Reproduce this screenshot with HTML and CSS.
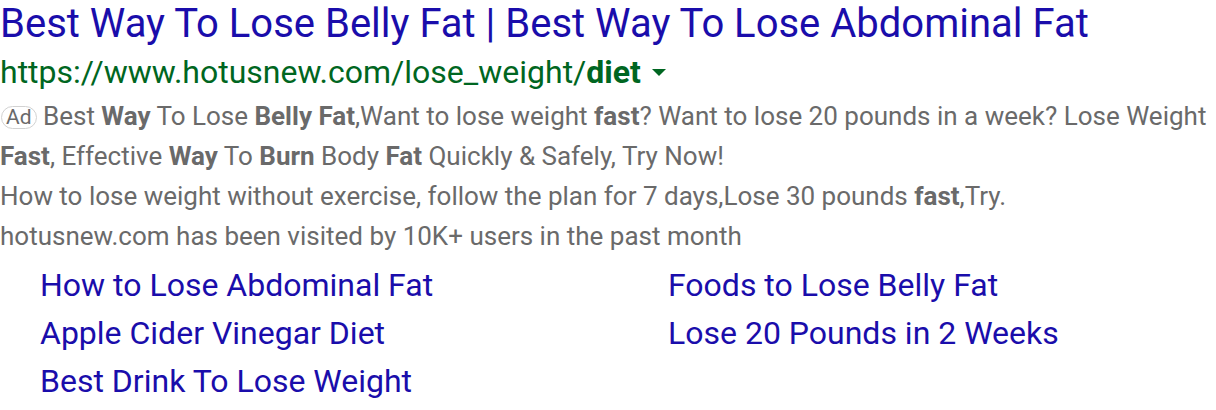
FILE: index.html
```html
<!DOCTYPE html>
<html>
<head>
<meta charset="utf-8">
<link rel="stylesheet" href="styles.css">
</head>
<body>
<div class="ad">
  <a class="title" href="#">Best Way To Lose Belly Fat | Best Way To Lose Abdominal Fat</a>
  <div class="url">https://www.hotusnew.com/lose_weight/<b>diet</b><span class="caret"></span></div>
  <div class="desc">
    <span class="badge">Ad</span> Best <b>Way</b> To Lose <b>Belly Fat</b>,Want to lose weight <b>fast</b>? Want to lose 20 pounds in a week? Lose Weight <b>Fast</b>, Effective <b>Way</b> To <b>Burn</b> Body <b>Fat</b> Quickly &amp; Safely, Try Now!
  </div>
  <div class="desc">How to lose weight without exercise, follow the plan for 7 days,Lose 30 pounds <b>fast</b>,Try.</div>
  <div class="desc">hotusnew.com has been visited by 10K+ users in the past month</div>
  <div class="sitelinks">
    <a href="#">How to Lose Abdominal Fat</a>
    <a href="#">Foods to Lose Belly Fat</a>
    <a href="#">Apple Cider Vinegar Diet</a>
    <a href="#">Lose 20 Pounds in 2 Weeks</a>
    <a href="#">Best Drink To Lose Weight</a>
  </div>
</div>
</body>
</html>
```
FILE: styles.css
```css
html, body {
  margin: 0;
  padding: 0;
  background: #fff;
}
body {
  font-family: Roboto, "Liberation Sans", Arial, sans-serif;
}
a {
  text-decoration: none;
}
.ad {
  display: flex;
  flex-direction: column;
  align-items: flex-start;
}
.title {
  color: #1a0dab;
  font-size: 40px;
  line-height: 48px;
  display: block;
}
.url {
  color: #006621;
  font-size: 32px;
  line-height: 48px;
}
.url b {
  font-weight: 700;
}
.caret {
  display: inline-block;
  width: 0;
  height: 0;
  border-left: 7px solid transparent;
  border-right: 7px solid transparent;
  border-top: 7px solid #006621;
  margin-left: 11px;
  vertical-align: middle;
  position: relative;
  top: -2px;
}
.desc {
  color: #6a6a6a;
  font-size: 26px;
  line-height: 40px;
  width: 1212px;
}
.desc:first-of-type {
  margin-top: 1px;
}
.desc b {
  font-weight: 700;
}
.badge {
  display: inline-block;
  border: 1.5px solid #d2d2d2;
  border-radius: 12px;
  font-size: 21px;
  line-height: 21px;
  padding: 0 4px;
  margin-left: 1px;
  vertical-align: 1px;
}
.sitelinks {
  display: grid;
  grid-template-columns: 628px 1fr;
  padding-left: 40px;
  margin-top: 5px;
}
.sitelinks a {
  color: #1a0dab;
  font-size: 32px;
  line-height: 48px;
}
```
